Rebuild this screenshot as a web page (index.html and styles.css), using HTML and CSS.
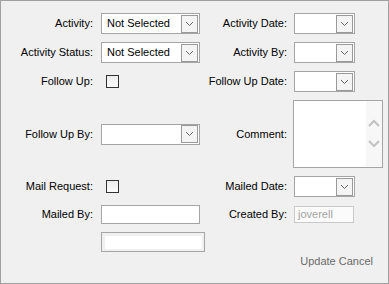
FILE: index.html
```html
<!DOCTYPE html>
<html>
<head>
<meta charset="utf-8">
<link rel="stylesheet" href="styles.css">
</head>
<body>
<div class="frame">
  <div class="form">
    <div class="lbl l1">Activity:</div>
    <div class="fld"><div class="select w99"><span class="val">Not Selected</span><span class="btn"><svg width="9" height="6" viewBox="0 0 9 6"><polyline points="1,1 4.5,4.5 8,1" fill="none" stroke="#666" stroke-width="1"/></svg></span></div></div>
    <div class="lbl l2">Activity Date:</div>
    <div class="fld"><div class="select w61"><span class="val"></span><span class="btn"><svg width="9" height="6" viewBox="0 0 9 6"><polyline points="1,1 4.5,4.5 8,1" fill="none" stroke="#666" stroke-width="1"/></svg></span></div></div>

    <div class="lbl l1">Activity Status:</div>
    <div class="fld"><div class="select w99"><span class="val">Not Selected</span><span class="btn"><svg width="9" height="6" viewBox="0 0 9 6"><polyline points="1,1 4.5,4.5 8,1" fill="none" stroke="#666" stroke-width="1"/></svg></span></div></div>
    <div class="lbl l2">Activity By:</div>
    <div class="fld"><div class="select w61"><span class="val"></span><span class="btn"><svg width="9" height="6" viewBox="0 0 9 6"><polyline points="1,1 4.5,4.5 8,1" fill="none" stroke="#666" stroke-width="1"/></svg></span></div></div>

    <div class="lbl l1">Follow Up:</div>
    <div class="fld"><span class="check"></span></div>
    <div class="lbl l2">Follow Up Date:</div>
    <div class="fld"><div class="select w61"><span class="val"></span><span class="btn"><svg width="9" height="6" viewBox="0 0 9 6"><polyline points="1,1 4.5,4.5 8,1" fill="none" stroke="#666" stroke-width="1"/></svg></span></div></div>

    <div class="lbl l1">Follow Up By:</div>
    <div class="fld"><div class="select w99"><span class="val"></span><span class="btn"><svg width="9" height="6" viewBox="0 0 9 6"><polyline points="1,1 4.5,4.5 8,1" fill="none" stroke="#666" stroke-width="1"/></svg></span></div></div>
    <div class="lbl l2">Comment:</div>
    <div class="fld"><div class="textarea"><div class="ta-body"></div><div class="ta-scroll"><svg width="12" height="8" viewBox="0 0 12 8"><polyline points="1,7 6,2 11,7" fill="none" stroke="#c2c2c2" stroke-width="2"/></svg><svg width="12" height="8" viewBox="0 0 12 8"><polyline points="1,1 6,6 11,1" fill="none" stroke="#c2c2c2" stroke-width="2"/></svg></div></div></div>

    <div class="lbl l1">Mail Request:</div>
    <div class="fld"><span class="check"></span></div>
    <div class="lbl l2">Mailed Date:</div>
    <div class="fld"><div class="select w61"><span class="val"></span><span class="btn"><svg width="9" height="6" viewBox="0 0 9 6"><polyline points="1,1 4.5,4.5 8,1" fill="none" stroke="#666" stroke-width="1"/></svg></span></div></div>

    <div class="lbl l1">Mailed By:</div>
    <div class="fld"><div class="input mailed"></div></div>
    <div class="lbl l2">Created By:</div>
    <div class="fld"><div class="input created">joverell</div></div>

    <div class="lbl l1"></div>
    <div class="fld"><div class="input wide"><div class="wide-inner"></div></div></div>
    <div class="lbl l2"></div>
    <div class="fld"></div>
  </div>
  <div class="actions"><span>Update</span> <span>Cancel</span></div>
</div>
</body>
</html>
```

FILE: styles.css
```css
* { box-sizing: border-box; }
html, body { margin: 0; padding: 0; }
body {
  font-family: "Liberation Sans", Arial, sans-serif;
  font-size: 11px;
  color: #000;
  background: #f0f0f0;
}
.frame {
  width: 389px;
  height: 284px;
  border: 1px solid #a0a0a0;
  background: #f0f0f0;
}
.form {
  display: grid;
  grid-template-columns: 100px 104px 89px 94px;
  grid-template-rows: 21px 21px 21px 68px 21px 19px 20px;
  row-gap: 8px;
  padding-top: 12px;
  align-items: center;
}
.lbl {
  text-align: right;
  white-space: nowrap;
  line-height: 13px;
}
.l1 { padding-right: 8px; }
.l2 { padding-right: 7px; }
.fld { display: flex; align-items: center; height: 100%; }
.select {
  display: flex;
  align-items: center;
  height: 21px;
  border: 1px solid #a5a5a5;
  background: #fff;
}
.w99 { width: 99px; }
.w61 { width: 61px; }
.val {
  flex: 1;
  padding-left: 5px;
  color: #000;
  white-space: nowrap;
  line-height: 13px;
}
.btn {
  width: 17px;
  height: 18px;
  margin-right: 1px;
  border: 1px solid #999;
  background: #f4f4f4;
  display: flex;
  align-items: center;
  justify-content: center;
}
.check {
  width: 13px;
  height: 13px;
  margin-left: 5px;
  border: 1px solid #333;
  background: linear-gradient(#ededed, #fcfcfc);
}
.textarea {
  width: 90px;
  height: 68px;
  margin-left: -1px;
  border: 1px solid #a5a5a5;
  background: #fff;
  display: flex;
}
.ta-body { flex: 1; }
.ta-scroll {
  width: 16px;
  background: #f7f7f7;
  display: flex;
  flex-direction: column;
  align-items: center;
  justify-content: center;
  gap: 13px;
  padding-bottom: 2px;
}
.input {
  border: 1px solid #a5a5a5;
  background: #fff;
}
.mailed { width: 99px; height: 19px; }
.created {
  width: 60px;
  height: 17px;
  border-color: #c9c9c9;
  background: #fbfbfb;
  color: #a3a3a3;
  padding-left: 3px;
  line-height: 15px;
}
.wide {
  width: 104px;
  height: 20px;
  padding: 3px 2px 2px 3px;
  background: #f0f0f0;
}
.wide-inner { width: 100%; height: 100%; background: #fff; }
.actions {
  margin-top: 3px;
  text-align: right;
  padding-right: 15px;
  color: #6a6a6a;
  line-height: 13px;
}
```
